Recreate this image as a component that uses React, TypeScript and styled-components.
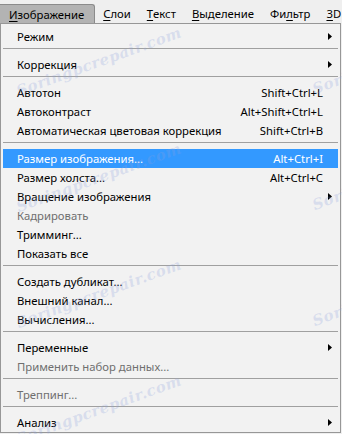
import React from "react";
import styled, { createGlobalStyle, css } from "styled-components";

const Global = createGlobalStyle`
  html, body { margin: 0; padding: 0; background: #f0f0f0; }
  body { font-family: "Noto Sans", "Open Sans", sans-serif; font-size: 11.3px; color: #000; }
`;

const Screen = styled.div`
  position: relative;
  width: 342px;
  height: 434px;
  overflow: hidden;
  background: #efefef;
`;

const MenuBar = styled.div`
  display: flex;
  align-items: flex-end;
  height: 23px;
  background: #efefef;
`;

const BarItem = styled.div<{ $active?: boolean }>`
  box-sizing: border-box;
  height: 19px;
  display: flex;
  align-items: center;
  padding: 0 8px;
  white-space: nowrap;
  ${(p) =>
    p.$active &&
    css`
      background: #b3b3b3;
      border: 1px solid #8b8b8b;
      border-bottom: none;
      border-left: none;
      border-radius: 0 3px 0 0;
      padding: 0 10px 0 9px;
    `}
`;

const Key = styled.span`
  text-decoration: underline;
  text-underline-offset: 2px;
`;

const Dropdown = styled.div`
  box-sizing: border-box;
  width: 341px;
  border: 1px solid #979797;
  background: #f2f2f2;
  padding: 3px 2px 0 2px;
`;

const Row = styled.div<{ $hl?: boolean; $disabled?: boolean }>`
  height: 19px;
  display: grid;
  grid-template-columns: 1fr auto 15px;
  align-items: center;
  padding-left: 14px;
  white-space: nowrap;
  color: ${(p) => (p.$disabled ? "#6f6f6f" : "#000")};
  ${(p) =>
    p.$hl &&
    css`
      background: #3399ff;
      color: #fff;
    `}
`;

const Label = styled.span``;
const Shortcut = styled.span``;

const ArrowCell = styled.span`
  display: flex;
  align-items: center;
  padding-left: 5px;
`;

const Separator = styled.div`
  height: 1px;
  margin: 2px 0 6px 0;
  background: #a0a0a0;
`;

const Watermarks = styled.div`
  position: absolute;
  inset: 0;
  pointer-events: none;
  overflow: hidden;
`;

const Mark = styled.span`
  position: absolute;
  font-family: "DejaVu Serif", serif;
  font-style: italic;
  font-weight: bold;
  font-size: 15px;
  line-height: 18px;
  letter-spacing: 0.5px;
  color: rgba(140, 160, 220, 0.26);
  transform: rotate(-20deg);
  transform-origin: left bottom;
  white-space: nowrap;
`;

const Arrow = () => (
  <svg width="4" height="7" viewBox="0 0 4 7">
    <polygon points="0,0 4,3.5 0,7" fill="#000" />
  </svg>
);

type Item =
  | { sep: true }
  | { label: string; shortcut?: string; sub?: boolean; hl?: boolean; disabled?: boolean; sep?: false };

const items: Item[] = [
  { label: "Режим", sub: true },
  { sep: true },
  { label: "Коррекция", sub: true },
  { sep: true },
  { label: "Автотон", shortcut: "Shift+Ctrl+L" },
  { label: "Автоконтраст", shortcut: "Alt+Shift+Ctrl+L" },
  { label: "Автоматическая цветовая коррекция", shortcut: "Shift+Ctrl+B" },
  { sep: true },
  { label: "Размер изображения...", shortcut: "Alt+Ctrl+I", hl: true },
  { label: "Размер холста...", shortcut: "Alt+Ctrl+C" },
  { label: "Вращение изображения", sub: true },
  { label: "Кадрировать", disabled: true },
  { label: "Тримминг..." },
  { label: "Показать все" },
  { sep: true },
  { label: "Создать дубликат..." },
  { label: "Внешний канал..." },
  { label: "Вычисления..." },
  { sep: true },
  { label: "Переменные", sub: true },
  { label: "Применить набор данных...", disabled: true },
  { sep: true },
  { label: "Треппинг...", disabled: true },
  { sep: true },
  { label: "Анализ", sub: true },
];

const marks: [number, number][] = [
  [20, 100],
  [20, 216],
  [20, 332],
  [20, 448],
  [316, 98],
  [316, 214],
  [316, 330],
];

export default function App() {
  return (
    <Screen>
      <Global />
      <MenuBar>
        <BarItem $active>
          <Key>И</Key>зображение
        </BarItem>
        <BarItem>
          <Key>С</Key>лои
        </BarItem>
        <BarItem>
          <Key>Т</Key>екст
        </BarItem>
        <BarItem>
          <Key>В</Key>ыделение
        </BarItem>
        <BarItem>
          Фи<Key>л</Key>ьтр
        </BarItem>
        <BarItem>
          <Key>3</Key>D
        </BarItem>
      </MenuBar>
      <Dropdown>
        {items.map((it, i) =>
          it.sep ? (
            <Separator key={i} />
          ) : (
            <Row key={i} $hl={it.hl} $disabled={it.disabled}>
              <Label>{it.label}</Label>
              <Shortcut>{it.shortcut ?? ""}</Shortcut>
              <ArrowCell>{it.sub ? <Arrow /> : null}</ArrowCell>
            </Row>
          )
        )}
      </Dropdown>
      <Watermarks>
        {marks.map(([x, y], i) => (
          <Mark key={i} style={{ left: x, top: y - 18 }}>
            Soringpcrepair.com
          </Mark>
        ))}
      </Watermarks>
    </Screen>
  );
}
